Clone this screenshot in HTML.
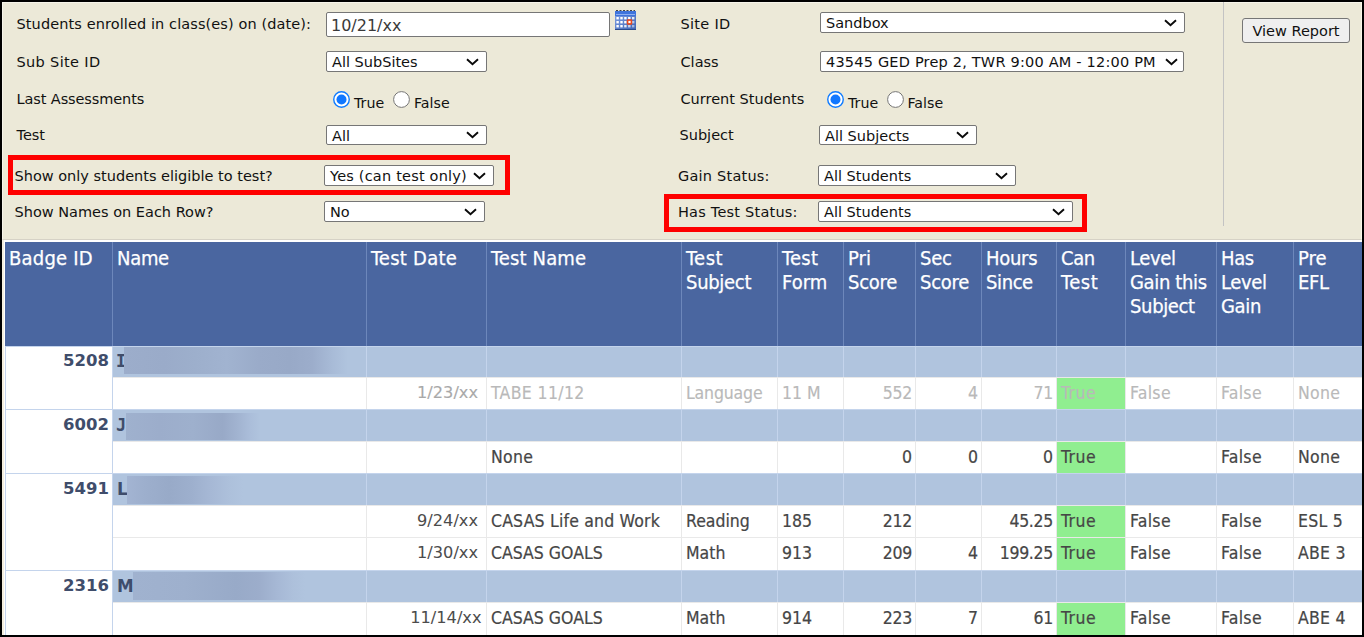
<!DOCTYPE html>
<html lang="en">
<head>
<meta charset="utf-8">
<title>Students Eligible to Test</title>
<style>
html,body{margin:0;padding:0}
body{width:1364px;height:637px;background:#000;position:relative;overflow:hidden;font-family:"DejaVu Sans","Liberation Sans",sans-serif}
.abs,.abs *{position:absolute;box-sizing:border-box}
.th span,.th br{position:static}
.abs{left:0;top:0;width:1364px;height:637px}
#page{left:2px;top:2px;width:1360px;height:633px;background:#fff}
#form{left:2px;top:2px;width:1360px;height:238px;background:#ece9d8;border-left:1px solid #f6f4ea;border-top:1px solid #f6f4ea;border-bottom:1px solid #d6d2c6;border-right:1px solid #faf7e8}
#edge{left:2px;top:240px;width:2px;height:395px;background:#f4efe0}
.lb{font-size:14.5px;line-height:18px;color:#111;white-space:nowrap;height:18px}
.sel{background:#fff;border:1px solid #767676;border-radius:2px;font-size:14.5px;color:#111;white-space:nowrap;overflow:hidden}
.sel span{left:5px;top:1px;line-height:19px;height:19px}
.sel svg{top:50%;margin-top:-4px;width:13px;height:8px}
.inp{background:#fff;border:1px solid #767676;border-radius:2px}
.inp span{left:4px;top:0.5px;font-size:16px;line-height:23px;color:#3a3a3a}
.rad{width:17px;height:17px;border-radius:50%;background:#fff;border:1px solid #767676}
.rad.on{border:2px solid #0075ff}
.rad.on i{left:2px;top:2px;width:9px;height:9px;border-radius:50%;background:#0075ff}
.rl{font-size:14.2px;line-height:18px;color:#111}
.red{border:5px solid #fe0000}
.btn{background:#efefef;border:1px solid #767676;border-radius:3px;font-size:14.5px;color:#111;text-align:center;line-height:25px}
.vline{background:#c3c3c3;width:1px}
#thead{left:5px;top:242px;width:1357px;height:104px;background:#4a66a0}
.th{top:0;height:104px;border-left:1px solid #6d87bb;color:#fff;font-family:"DejaVu Sans Condensed","Liberation Sans",sans-serif;font-size:20px;line-height:24px;padding:4px 0 0 4px;white-space:nowrap;-webkit-text-stroke:0.25px #fff}
.row{left:5px;width:1357px}
.g{background:#b0c4de}
.w{background:#fff}
.c{top:0;height:100%;border-left:1px solid #e9e9e9;border-top:1px solid #e9e9e9;font-family:"DejaVu Sans Condensed","Liberation Sans",sans-serif;font-size:17.5px;line-height:31px;color:#464646;-webkit-text-stroke:0.2px #464646;white-space:nowrap;padding:0 4px}
.g .c{border-left:1px solid #c4d4ec;border-top:1px solid #c4d4ec}
.r{text-align:right;padding-right:3px}
.d{font-family:"DejaVu Sans","Liberation Sans",sans-serif;font-size:16.2px;line-height:29px;color:#4c4c4c;-webkit-text-stroke:0}
.dis .c{color:#b9b9b9;-webkit-text-stroke:0.15px #b9b9b9}
.dis .d{color:#a8a8a8}
.grn{background:#90ee90}
.bid{background:#fff;border-top:1px solid #c4d4ec;border-right:1px solid #c4d4ec;border-left:1px solid #c4d4ec;font-weight:bold;font-size:16.5px;color:#3f4d6b;text-align:right;line-height:28px;padding-right:3px;left:5px;width:108px}
.nm{font-family:"DejaVu Sans","Liberation Sans",sans-serif;font-weight:bold;font-size:16.8px;color:#3f4d6b;line-height:28px;-webkit-text-stroke:0}
.nm b{font-family:"DejaVu Sans Mono","Liberation Mono",monospace;left:3px;top:0}
.blur{top:1px;height:26px}
.nm{overflow:hidden}
</style>
</head>
<body>
<div class="abs">
<div id="page"></div>
<div id="edge"></div>
<div id="form"></div>
<div class="lb" style="left:16.5px;top:15px;letter-spacing:0.1px">Students enrolled in class(es) on (date):</div>
<div class="lb" style="left:16.5px;top:53px;letter-spacing:0.35px">Sub Site ID</div>
<div class="lb" style="left:16.5px;top:89.6px;letter-spacing:-0.1px">Last Assessments</div>
<div class="lb" style="left:16.5px;top:126px">Test</div>
<div class="lb" style="left:14.5px;top:166.5px">Show only students eligible to test?</div>
<div class="lb" style="left:14.5px;top:202.5px">Show Names on Each Row?</div>
<div class="inp" style="left:326px;top:12px;width:284px;height:25px"><span>10/21/xx</span></div>
<svg style="left:615px;top:10px;width:21px;height:20px" viewBox="0 0 21 20">
<defs><linearGradient id="cg" x1="0" y1="0" x2="1" y2="1"><stop offset="0" stop-color="#86a6e6"/><stop offset="1" stop-color="#3c62b4"/></linearGradient></defs>
<rect x="0" y="1" width="21" height="19" fill="url(#cg)"/>
<rect x="0" y="1" width="21" height="5" fill="#3f74dc"/>
<rect x="1" y="4" width="19" height="1" fill="#8fb0f0"/>
<path d="M1 0.5h2M4.5 0.5h2M8 0.5h2M11.5 0.5h2M15 0.5h2M18.5 0.5h1.5" stroke="#444" stroke-width="1"/>
<g fill="#fff"><rect x="1.4" y="7" width="2.4" height="2.4"/><rect x="5.3" y="7" width="2.4" height="2.4"/><rect x="9.2" y="7" width="2.4" height="2.4"/><rect x="13.1" y="7" width="2.4" height="2.4"/><rect x="17" y="7" width="2.4" height="2.4" opacity=".85"/>
<rect x="1.4" y="11" width="2.4" height="2.4"/><rect x="5.3" y="11" width="2.4" height="2.4"/><rect x="9.2" y="11" width="2.4" height="2.4"/><rect x="17" y="11" width="2.4" height="2.4" opacity=".6"/>
<rect x="1.4" y="15" width="2.4" height="2.4"/><rect x="5.3" y="15" width="2.4" height="2.4"/><rect x="9.2" y="15" width="2.4" height="2.4" opacity=".85"/><rect x="13.1" y="15" width="2.4" height="2.4" opacity=".7"/><rect x="17" y="15" width="2.4" height="2.4" opacity=".5"/></g>
<rect x="11.8" y="9.2" width="5.4" height="5.6" rx="0.8" fill="#e8481c"/>
<rect x="13.4" y="10.9" width="2.2" height="2.2" fill="#fff"/>
<rect x="0" y="19" width="21" height="1" fill="#2a4a8a"/>
</svg>
<div class="sel" style="left:326px;top:51px;width:161px;height:21px"><span style="line-height:19px;height:19px">All SubSites</span><svg viewBox="0 0 13 8" style="left:139px"><path d="M1 1.2 L6.5 6.3 L12 1.2" fill="none" stroke="#0a0a0a" stroke-width="1.9" stroke-linecap="butt" stroke-linejoin="miter"/></svg></div>
<svg style="left:333px;top:91px;width:17px;height:17px" viewBox="0 0 17 17"><circle cx="8.5" cy="8.5" r="7.75" fill="#fff" stroke="#0f7bff" stroke-width="1.4"/><circle cx="8.5" cy="8.5" r="5" fill="#1177ff"/></svg>
<div class="rl" style="left:354px;top:94px">True</div>
<svg style="left:393px;top:91px;width:17px;height:17px" viewBox="0 0 17 17"><circle cx="8.5" cy="8.5" r="7.9" fill="#fff" stroke="#767676" stroke-width="1"/></svg>
<div class="rl" style="left:414px;top:94px">False</div>
<div class="sel" style="left:326px;top:125px;width:161px;height:20px"><span style="line-height:18px;height:18px">All</span><svg viewBox="0 0 13 8" style="left:139px"><path d="M1 1.2 L6.5 6.3 L12 1.2" fill="none" stroke="#0a0a0a" stroke-width="1.9" stroke-linecap="butt" stroke-linejoin="miter"/></svg></div>
<div class="sel" style="left:324px;top:165px;width:170px;height:21px"><span style="line-height:19px;height:19px;letter-spacing:0.2px">Yes (can test only)</span><svg viewBox="0 0 13 8" style="left:148px"><path d="M1 1.2 L6.5 6.3 L12 1.2" fill="none" stroke="#0a0a0a" stroke-width="1.9" stroke-linecap="butt" stroke-linejoin="miter"/></svg></div>
<div class="sel" style="left:324px;top:201px;width:161px;height:21px"><span style="line-height:19px;height:19px">No</span><svg viewBox="0 0 13 8" style="left:139px"><path d="M1 1.2 L6.5 6.3 L12 1.2" fill="none" stroke="#0a0a0a" stroke-width="1.9" stroke-linecap="butt" stroke-linejoin="miter"/></svg></div>
<div class="red" style="left:8px;top:155px;width:502px;height:40px"></div>
<div class="lb" style="left:680.5px;top:15px;letter-spacing:0.3px">Site ID</div>
<div class="lb" style="left:680.5px;top:53px">Class</div>
<div class="lb" style="left:680.5px;top:89.6px">Current Students</div>
<div class="lb" style="left:679.5px;top:126px">Subject</div>
<div class="lb" style="left:678px;top:166.5px;letter-spacing:0.22px">Gain Status:</div>
<div class="lb" style="left:678px;top:202.5px;letter-spacing:0.22px">Has Test Status:</div>
<div class="sel" style="left:820px;top:12px;width:365px;height:21px"><span style="line-height:19px;height:19px">Sandbox</span><svg viewBox="0 0 13 8" style="left:343px"><path d="M1 1.2 L6.5 6.3 L12 1.2" fill="none" stroke="#0a0a0a" stroke-width="1.9" stroke-linecap="butt" stroke-linejoin="miter"/></svg></div>
<div class="sel" style="left:820px;top:51px;width:364px;height:21px"><span style="line-height:19px;height:19px;letter-spacing:0.2px">43545 GED Prep 2, TWR 9:00 AM - 12:00 PM</span><svg viewBox="0 0 13 8" style="left:343.5px"><path d="M1 1.2 L6.5 6.3 L12 1.2" fill="none" stroke="#0a0a0a" stroke-width="1.9" stroke-linecap="butt" stroke-linejoin="miter"/></svg></div>
<svg style="left:827px;top:91px;width:17px;height:17px" viewBox="0 0 17 17"><circle cx="8.5" cy="8.5" r="7.75" fill="#fff" stroke="#0f7bff" stroke-width="1.4"/><circle cx="8.5" cy="8.5" r="5" fill="#1177ff"/></svg>
<div class="rl" style="left:848px;top:94px">True</div>
<svg style="left:887px;top:91px;width:17px;height:17px" viewBox="0 0 17 17"><circle cx="8.5" cy="8.5" r="7.9" fill="#fff" stroke="#767676" stroke-width="1"/></svg>
<div class="rl" style="left:907.5px;top:94px">False</div>
<div class="sel" style="left:819px;top:125px;width:158px;height:20px"><span style="line-height:18px;height:18px">All Subjects</span><svg viewBox="0 0 13 8" style="left:136px"><path d="M1 1.2 L6.5 6.3 L12 1.2" fill="none" stroke="#0a0a0a" stroke-width="1.9" stroke-linecap="butt" stroke-linejoin="miter"/></svg></div>
<div class="sel" style="left:818px;top:165px;width:198px;height:21px"><span style="line-height:19px;height:19px">All Students</span><svg viewBox="0 0 13 8" style="left:176px"><path d="M1 1.2 L6.5 6.3 L12 1.2" fill="none" stroke="#0a0a0a" stroke-width="1.9" stroke-linecap="butt" stroke-linejoin="miter"/></svg></div>
<div class="sel" style="left:818px;top:201px;width:255px;height:21px"><span style="line-height:19px;height:19px">All Students</span><svg viewBox="0 0 13 8" style="left:233px"><path d="M1 1.2 L6.5 6.3 L12 1.2" fill="none" stroke="#0a0a0a" stroke-width="1.9" stroke-linecap="butt" stroke-linejoin="miter"/></svg></div>
<div class="red" style="left:664px;top:194px;width:423px;height:38px"></div>
<div class="vline" style="left:1223px;top:2px;height:224px"></div>
<div class="btn" style="left:1242px;top:18px;width:108px;height:25px">View Report</div>
<div id="thead">
<div class="th" style="border-left:none;left:0px;width:107px"><span style="letter-spacing:0.2px">Badge ID</span></div>
<div class="th" style="left:107px;width:254px"><span style="letter-spacing:-0.3px">Name</span></div>
<div class="th" style="left:361px;width:120px"><span style="letter-spacing:0.25px">Test Date</span></div>
<div class="th" style="left:481px;width:195px"><span style="letter-spacing:0.15px">Test Name</span></div>
<div class="th" style="left:676px;width:96px"><span style="letter-spacing:0.5px">Test</span><br><span style="letter-spacing:-0.3px">Subject</span></div>
<div class="th" style="left:772px;width:66px"><span style="letter-spacing:0.3px">Test</span><br>Form</div>
<div class="th" style="left:838px;width:72px">Pri<br><span style="letter-spacing:-0.25px">Score</span></div>
<div class="th" style="left:910px;width:66px"><span style="letter-spacing:-0.2px">Sec</span><br><span style="letter-spacing:-0.25px">Score</span></div>
<div class="th" style="left:976px;width:75px"><span style="letter-spacing:-0.3px">Hours</span><br><span style="letter-spacing:-0.4px">Since</span></div>
<div class="th" style="left:1051px;width:69px"><span style="letter-spacing:-0.4px">Can</span><br><span style="letter-spacing:0.6px">Test</span></div>
<div class="th" style="left:1120px;width:91px"><span style="letter-spacing:-0.35px">Level</span><br><span style="letter-spacing:-0.35px">Gain this</span><br><span style="letter-spacing:-0.35px">Subject</span></div>
<div class="th" style="left:1211px;width:77px"><span style="letter-spacing:-0.35px">Has</span><br><span style="letter-spacing:-0.35px">Level</span><br><span style="letter-spacing:-0.35px">Gain</span></div>
<div class="th" style="left:1288px;width:69px">Pre<br><span style="letter-spacing:-0.4px">EFL</span></div>
</div>
<div class="row g" style="top:346px;height:31px">
<div class="c nm" style="line-height:28px;left:107px;width:254px"><b>I</b><div class="blur" style="left:11px;width:224px;top:0px;height:27px;background:linear-gradient(to right,#9cadcb 0,#9aabc9 18%,#9dafcc 32%,#a1b3d0 46%,#9aabc9 60%,#98a9c7 74%,#9cadcb 84%,#a8bbd7 93%,rgba(176,196,222,0) 100%)"></div></div>
<div class="c" style="left:361px;width:120px"></div>
<div class="c" style="left:481px;width:195px"></div>
<div class="c" style="left:676px;width:96px"></div>
<div class="c" style="left:772px;width:66px"></div>
<div class="c" style="left:838px;width:72px"></div>
<div class="c" style="left:910px;width:66px"></div>
<div class="c" style="left:976px;width:75px"></div>
<div class="c" style="left:1051px;width:69px"></div>
<div class="c" style="left:1120px;width:91px"></div>
<div class="c" style="left:1211px;width:77px"></div>
<div class="c" style="left:1288px;width:69px"></div>
</div>
<div class="row w dis" style="top:377px;height:32px">
<div class="c" style="left:107px;width:254px"></div>
<div class="c r d" style="padding-right:8px;left:361px;width:120px">1/23/xx</div>
<div class="c" style="letter-spacing:0.35px;left:481px;width:195px">TABE 11/12</div>
<div class="c" style="letter-spacing:-0.15px;left:676px;width:96px">Language</div>
<div class="c" style="left:772px;width:66px">11 M</div>
<div class="c r" style="letter-spacing:-0.3px;left:838px;width:72px">552</div>
<div class="c r" style="left:910px;width:66px">4</div>
<div class="c r" style="letter-spacing:-0.3px;left:976px;width:75px">71</div>
<div class="c  grn" style="letter-spacing:0.5px;left:1051px;width:69px">True</div>
<div class="c" style="letter-spacing:0.3px;left:1120px;width:91px">False</div>
<div class="c" style="letter-spacing:0.3px;left:1211px;width:77px">False</div>
<div class="c" style="letter-spacing:0.25px;left:1288px;width:69px">None</div>
</div>
<div class="row g" style="top:409px;height:32px">
<div class="c nm" style="line-height:30px;left:107px;width:254px"><b>J</b><div class="blur" style="left:13px;width:134px;top:3px;height:27px;background:linear-gradient(to right,#9fb1ce 0,#9cadcb 25%,#9eb0cd 50%,#98a9c7 72%,#a2b4d1 84%,#abbeda 93%,rgba(176,196,222,0) 100%)"></div></div>
<div class="c" style="left:361px;width:120px"></div>
<div class="c" style="left:481px;width:195px"></div>
<div class="c" style="left:676px;width:96px"></div>
<div class="c" style="left:772px;width:66px"></div>
<div class="c" style="left:838px;width:72px"></div>
<div class="c" style="left:910px;width:66px"></div>
<div class="c" style="left:976px;width:75px"></div>
<div class="c" style="left:1051px;width:69px"></div>
<div class="c" style="left:1120px;width:91px"></div>
<div class="c" style="left:1211px;width:77px"></div>
<div class="c" style="left:1288px;width:69px"></div>
</div>
<div class="row w" style="top:441px;height:32px">
<div class="c" style="left:107px;width:254px"></div>
<div class="c r d" style="left:361px;width:120px"></div>
<div class="c" style="letter-spacing:0.25px;left:481px;width:195px">None</div>
<div class="c" style="left:676px;width:96px"></div>
<div class="c" style="left:772px;width:66px"></div>
<div class="c r" style="left:838px;width:72px">0</div>
<div class="c r" style="left:910px;width:66px">0</div>
<div class="c r" style="left:976px;width:75px">0</div>
<div class="c  grn" style="letter-spacing:0.5px;left:1051px;width:69px">True</div>
<div class="c" style="left:1120px;width:91px"></div>
<div class="c" style="letter-spacing:0.3px;left:1211px;width:77px">False</div>
<div class="c" style="letter-spacing:0.25px;left:1288px;width:69px">None</div>
</div>
<div class="row g" style="top:473px;height:32px">
<div class="c nm" style="line-height:30px;left:107px;width:254px">L<div class="blur" style="left:14px;width:116px;top:2px;height:28px;background:linear-gradient(to right,#a3b4d2 0,#9dafcd 15%,#98aac8 36%,#9dafcd 55%,#a6b8d5 72%,#adc0db 88%,rgba(176,196,222,0) 100%)"></div></div>
<div class="c" style="left:361px;width:120px"></div>
<div class="c" style="left:481px;width:195px"></div>
<div class="c" style="left:676px;width:96px"></div>
<div class="c" style="left:772px;width:66px"></div>
<div class="c" style="left:838px;width:72px"></div>
<div class="c" style="left:910px;width:66px"></div>
<div class="c" style="left:976px;width:75px"></div>
<div class="c" style="left:1051px;width:69px"></div>
<div class="c" style="left:1120px;width:91px"></div>
<div class="c" style="left:1211px;width:77px"></div>
<div class="c" style="left:1288px;width:69px"></div>
</div>
<div class="row w" style="top:505px;height:32px">
<div class="c" style="left:107px;width:254px"></div>
<div class="c r d" style="padding-right:8px;left:361px;width:120px">9/24/xx</div>
<div class="c" style="letter-spacing:0.18px;left:481px;width:195px">CASAS Life and Work</div>
<div class="c" style="left:676px;width:96px">Reading</div>
<div class="c" style="left:772px;width:66px">185</div>
<div class="c r" style="letter-spacing:-0.3px;left:838px;width:72px">212</div>
<div class="c r" style="left:910px;width:66px"></div>
<div class="c r" style="letter-spacing:-0.3px;left:976px;width:75px">45.25</div>
<div class="c  grn" style="letter-spacing:0.5px;left:1051px;width:69px">True</div>
<div class="c" style="letter-spacing:0.3px;left:1120px;width:91px">False</div>
<div class="c" style="letter-spacing:0.3px;left:1211px;width:77px">False</div>
<div class="c" style="letter-spacing:0.25px;left:1288px;width:69px">ESL 5</div>
</div>
<div class="row w" style="top:537px;height:33px">
<div class="c" style="left:107px;width:254px"></div>
<div class="c r d" style="padding-right:8px;left:361px;width:120px">1/30/xx</div>
<div class="c" style="left:481px;width:195px">CASAS GOALS</div>
<div class="c" style="left:676px;width:96px">Math</div>
<div class="c" style="left:772px;width:66px">913</div>
<div class="c r" style="letter-spacing:-0.3px;left:838px;width:72px">209</div>
<div class="c r" style="left:910px;width:66px">4</div>
<div class="c r" style="letter-spacing:-0.3px;left:976px;width:75px">199.25</div>
<div class="c  grn" style="letter-spacing:0.5px;left:1051px;width:69px">True</div>
<div class="c" style="letter-spacing:0.3px;left:1120px;width:91px">False</div>
<div class="c" style="letter-spacing:0.3px;left:1211px;width:77px">False</div>
<div class="c" style="letter-spacing:0.25px;left:1288px;width:69px">ABE 3</div>
</div>
<div class="row g" style="top:570px;height:32px">
<div class="c nm" style="line-height:30px;left:107px;width:254px">M<div class="blur" style="left:20px;width:172px;top:1px;height:28px;background:linear-gradient(to right,#a0b2cf 0,#9eb0cd 30%,#98aac8 60%,#9cadcb 73%,#a6b8d5 84%,#adc0db 93%,rgba(176,196,222,0) 100%)"></div></div>
<div class="c" style="left:361px;width:120px"></div>
<div class="c" style="left:481px;width:195px"></div>
<div class="c" style="left:676px;width:96px"></div>
<div class="c" style="left:772px;width:66px"></div>
<div class="c" style="left:838px;width:72px"></div>
<div class="c" style="left:910px;width:66px"></div>
<div class="c" style="left:976px;width:75px"></div>
<div class="c" style="left:1051px;width:69px"></div>
<div class="c" style="left:1120px;width:91px"></div>
<div class="c" style="left:1211px;width:77px"></div>
<div class="c" style="left:1288px;width:69px"></div>
</div>
<div class="row w" style="top:602px;height:33px">
<div class="c" style="left:107px;width:254px"></div>
<div class="c r d" style="padding-right:4.5px;left:361px;width:120px">11/14/xx</div>
<div class="c" style="left:481px;width:195px">CASAS GOALS</div>
<div class="c" style="left:676px;width:96px">Math</div>
<div class="c" style="left:772px;width:66px">914</div>
<div class="c r" style="letter-spacing:-0.3px;left:838px;width:72px">223</div>
<div class="c r" style="left:910px;width:66px">7</div>
<div class="c r" style="letter-spacing:-0.3px;left:976px;width:75px">61</div>
<div class="c  grn" style="letter-spacing:0.5px;left:1051px;width:69px">True</div>
<div class="c" style="letter-spacing:0.3px;left:1120px;width:91px">False</div>
<div class="c" style="letter-spacing:0.3px;left:1211px;width:77px">False</div>
<div class="c" style="letter-spacing:0.25px;left:1288px;width:69px">ABE 4</div>
</div>
<div class="bid" style="line-height:28px;top:346px;height:63px">5208</div>
<div class="bid" style="line-height:30px;top:409px;height:64px">6002</div>
<div class="bid" style="line-height:30px;top:473px;height:97px">5491</div>
<div class="bid" style="line-height:30px;top:570px;height:65px">2316</div>
</div>
</body>
</html>
